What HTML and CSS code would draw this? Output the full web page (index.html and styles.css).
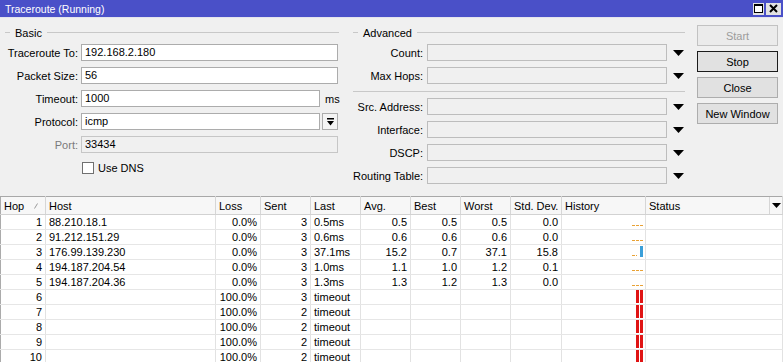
FILE: index.html
```html
<html lang="en"><head>
  <meta charset="UTF-8">
  <meta name="viewport" content="width=device-width, initial-scale=1.0">
  <title>Traceroute (Running)</title>
  <link rel="stylesheet" href="styles.css">
</head>
<body>
  <div class="titlebar">
    <span class="title">Traceroute (Running)</span>
    <span class="winbtns">
      <span class="winbtn max"><svg width="9" height="9" viewBox="0 0 9 9"><rect x=".5" y=".5" width="8" height="8" fill="#fff" stroke="#000"/><rect x="1" y="1" width="7" height="1" fill="#000"/></svg></span>
      <span class="winbtn close"><svg width="9" height="9" viewBox="0 0 9 9"><path d="M1 1l7 7M8 1L1 8" stroke="#000" stroke-width="2"/></svg></span>
    </span>
  </div>

  <div class="main">
    <section class="group basic">
      <div class="legend">Basic</div>
      <div class="form">
        <label>Traceroute To:</label>
        <div class="input">192.168.2.180</div>

        <label>Packet Size:</label>
        <div class="input">56</div>

        <label>Timeout:</label>
        <div class="field">
          <div class="input">1000</div>
          <span class="suffix unit">ms</span>
        </div>

        <label>Protocol:</label>
        <div class="field">
          <div class="input">icmp</div>
          <span class="suffix pick"><svg width="7" height="8" viewBox="0 0 7 8"><path d="M0 0h7v1.5H0zM0 3h7L3.5 7.5z"/></svg></span>
        </div>

        <label class="off">Port:</label>
        <div class="input disabled">33434</div>

        <span></span>
        <div class="check"><span class="box"></span>Use DNS</div>
      </div>
    </section>

    <section class="group advanced">
      <div class="legend">Advanced</div>
      <div class="form">
        <label>Count:</label>
        <div class="input"></div>
        <span class="drop"><svg width="11" height="6" viewBox="0 0 11 6"><path d="M0 0h11L5.5 6z"/></svg></span>

        <label>Max Hops:</label>
        <div class="input"></div>
        <span class="drop"><svg width="11" height="6" viewBox="0 0 11 6"><path d="M0 0h11L5.5 6z"/></svg></span>

        <div class="sep"></div>

        <label>Src. Address:</label>
        <div class="input"></div>
        <span class="drop"><svg width="11" height="6" viewBox="0 0 11 6"><path d="M0 0h11L5.5 6z"/></svg></span>

        <label>Interface:</label>
        <div class="input"></div>
        <span class="drop"><svg width="11" height="6" viewBox="0 0 11 6"><path d="M0 0h11L5.5 6z"/></svg></span>

        <label>DSCP:</label>
        <div class="input"></div>
        <span class="drop"><svg width="11" height="6" viewBox="0 0 11 6"><path d="M0 0h11L5.5 6z"/></svg></span>

        <label>Routing Table:</label>
        <div class="input"></div>
        <span class="drop"><svg width="11" height="6" viewBox="0 0 11 6"><path d="M0 0h11L5.5 6z"/></svg></span>
      </div>
    </section>

    <div class="buttons">
      <div class="btn disabled">Start</div>
      <div class="btn focus">Stop</div>
      <div class="btn">Close</div>
      <div class="btn">New Window</div>
    </div>
  </div>

  <table class="hops">
    <colgroup>
      <col class="c-hop"><col class="c-host"><col class="c-loss"><col class="c-sent"><col class="c-last">
      <col class="c-val"><col class="c-val"><col class="c-val"><col class="c-dev"><col class="c-hist"><col>
    </colgroup>
    <thead>
      <tr>
        <th><div class="hop-head">Hop<svg width="4" height="6" viewBox="0 0 4 6"><path d="M.5 5.5L3.5.5" stroke="#9a9a9a"/></svg></div></th>
        <th>Host</th>
        <th>Loss</th>
        <th>Sent</th>
        <th>Last</th>
        <th>Avg.</th>
        <th>Best</th>
        <th>Worst</th>
        <th>Std. Dev.</th>
        <th>History</th>
        <th class="status"><div class="status-head">Status<span class="menu"><svg width="9" height="5" viewBox="0 0 9 5"><path d="M0 0h9L4.5 5z"/></svg></span></div></th>
      </tr>
    </thead>
    <tbody>
      <tr><td class="num">1</td><td>88.210.18.1</td><td class="num">0.0%</td><td class="num">3</td><td>0.5ms</td><td class="num">0.5</td><td class="num">0.5</td><td class="num">0.5</td><td class="num">0.0</td><td class="hist"><div class="spark"><span class="dash"></span></div></td><td></td></tr>
      <tr><td class="num">2</td><td>91.212.151.29</td><td class="num">0.0%</td><td class="num">3</td><td>0.6ms</td><td class="num">0.6</td><td class="num">0.6</td><td class="num">0.6</td><td class="num">0.0</td><td class="hist"><div class="spark"><span class="dash"></span></div></td><td></td></tr>
      <tr><td class="num">3</td><td>176.99.139.230</td><td class="num">0.0%</td><td class="num">3</td><td>37.1ms</td><td class="num">15.2</td><td class="num">0.7</td><td class="num">37.1</td><td class="num">15.8</td><td class="hist"><div class="spark"><span class="dash short"></span><span class="bar blue"></span></div></td><td></td></tr>
      <tr><td class="num">4</td><td>194.187.204.54</td><td class="num">0.0%</td><td class="num">3</td><td>1.0ms</td><td class="num">1.1</td><td class="num">1.0</td><td class="num">1.2</td><td class="num">0.1</td><td class="hist"><div class="spark"><span class="dash"></span></div></td><td></td></tr>
      <tr><td class="num">5</td><td>194.187.204.36</td><td class="num">0.0%</td><td class="num">3</td><td>1.3ms</td><td class="num">1.3</td><td class="num">1.2</td><td class="num">1.3</td><td class="num">0.0</td><td class="hist"><div class="spark"><span class="dash"></span></div></td><td></td></tr>
      <tr><td class="num">6</td><td></td><td class="num">100.0%</td><td class="num">3</td><td>timeout</td><td></td><td></td><td></td><td></td><td class="hist"><div class="spark"><span class="bar red"></span><span class="bar red"></span></div></td><td></td></tr>
      <tr><td class="num">7</td><td></td><td class="num">100.0%</td><td class="num">2</td><td>timeout</td><td></td><td></td><td></td><td></td><td class="hist"><div class="spark"><span class="bar red"></span><span class="bar red"></span></div></td><td></td></tr>
      <tr><td class="num">8</td><td></td><td class="num">100.0%</td><td class="num">2</td><td>timeout</td><td></td><td></td><td></td><td></td><td class="hist"><div class="spark"><span class="bar red"></span><span class="bar red"></span></div></td><td></td></tr>
      <tr><td class="num">9</td><td></td><td class="num">100.0%</td><td class="num">2</td><td>timeout</td><td></td><td></td><td></td><td></td><td class="hist"><div class="spark"><span class="bar red"></span><span class="bar red"></span></div></td><td></td></tr>
      <tr><td class="num">10</td><td></td><td class="num">100.0%</td><td class="num">2</td><td>timeout</td><td></td><td></td><td></td><td></td><td class="hist"><div class="spark"><span class="bar red"></span><span class="bar red"></span></div></td><td></td></tr>
    </tbody>
  </table>
</body></html>
```

FILE: styles.css
```css
html, body {
  margin: 0;
  padding: 0;
}
body {
  width: 783px;
  height: 362px;
  overflow: hidden;
  background: #f0f0f0;
  color: #000;
  font-family: "Liberation Sans", Arial, sans-serif;
  font-size: 11px;
}
.titlebar {
  height: 17px;
  background: #4a50c8;
  color: #fff;
  display: flex;
  align-items: center;
  justify-content: space-between;
  padding: 0 2px 0 5px;
  border-bottom: 1px solid #e4e4ee;
}
.title {
  font-size: 10.5px;
}
.winbtns {
  display: flex;
  gap: 2px;
}
.winbtn {
  height: 12px;
  background: #e2e2e2;
  display: flex;
  align-items: center;
  justify-content: center;
}
.winbtn.max {
  width: 11px;
}
.winbtn.close {
  width: 15px;
}
.main {
  display: flex;
  align-items: flex-start;
  padding-top: 7px;
}
.group {
  display: flex;
  flex-direction: column;
}
.basic {
  margin-left: 5px;
  width: 334px;
}
.advanced {
  margin-left: 14px;
  width: 332px;
}
.legend {
  display: flex;
  align-items: center;
  gap: 5px;
  height: 13px;
  margin-top: 1px;
}
.legend::before {
  content: "";
  width: 5px;
  height: 1px;
  background: #c8c8c8;
}
.legend::after {
  content: "";
  flex: 1;
  height: 1px;
  background: #c8c8c8;
}
.form {
  display: grid;
  row-gap: 6px;
  margin-top: 5px;
  align-items: center;
}
.basic .form {
  grid-template-columns: 73px 257px;
  column-gap: 3px;
}
.advanced .form {
  grid-template-columns: 70px 240px 14px;
  column-gap: 4px;
}
label {
  text-align: right;
  white-space: nowrap;
}
label.off {
  color: #7a7a7a;
}
.input {
  height: 17px;
  box-sizing: border-box;
  border: 1px solid #acacac;
  background: #fff;
  padding: 0 3px;
  line-height: 15px;
  white-space: nowrap;
}
.input.disabled {
  background: #f0f0f0;
  border-color: #c6c6c6;
}
.advanced .input {
  background: #f0f0f0;
  border-color: #bdbdbd;
}
.field {
  display: flex;
  align-items: center;
  gap: 2px;
}
.field .input {
  flex: 1;
}
.suffix {
  width: 16px;
  flex: none;
}
.unit {
  padding-left: 3px;
  box-sizing: border-box;
}
.pick {
  height: 17px;
  box-sizing: border-box;
  border: 1px solid #acacac;
  background: #f4f4f4;
  display: flex;
  align-items: center;
  justify-content: center;
}
.check {
  display: flex;
  align-items: center;
  gap: 4px;
  height: 17px;
  padding-left: 1px;
}
.box {
  width: 12px;
  height: 12px;
  box-sizing: border-box;
  border: 1px solid #707070;
  background: #fff;
}
.drop {
  display: flex;
  justify-content: center;
}
.sep {
  grid-column: 1 / -1;
  height: 1px;
  margin-top: 1px;
  background: #c8c8c8;
}
.buttons {
  margin-left: 12px;
  width: 81px;
  display: flex;
  flex-direction: column;
  gap: 5px;
}
.btn {
  height: 21px;
  box-sizing: border-box;
  border: 1px solid #adadad;
  background: #e1e1e1;
  display: flex;
  align-items: center;
  justify-content: center;
}
.btn.disabled {
  color: #9c9c9c;
  border-color: #c2c2c2;
  background: #ebebeb;
}
.btn.focus {
  border-color: #1c1c1c;
}

/* hop table */
.hops {
  margin-top: 12px;
  width: 783px;
  border-collapse: collapse;
  table-layout: fixed;
  background: #fff;
  font-family: inherit;
  font-size: 11px;
  color: #000;
}
.c-hop { width: 45px; }
.c-host { width: 170px; }
.c-loss { width: 45px; }
.c-sent, .c-last, .c-val { width: 50px; }
.c-dev { width: 51px; }
.c-hist { width: 84px; }
.hops th, .hops td {
  padding: 0 3px;
  border-right: 1px solid #e2e2e2;
  border-bottom: 1px solid #e6e6e6;
  white-space: nowrap;
  overflow: hidden;
  font-weight: normal;
}
.hops th:first-child, .hops td:first-child {
  border-left: 1px solid #ababab;
}
.hops th {
  height: 17px;
  text-align: left;
  background: #f7f7f7;
  border-top: 1px solid #a8a8a8;
  border-right-color: #d6d6d6;
  border-bottom-color: #d2d2d2;
}
.hops td {
  height: 14px;
  line-height: 14px;
}
.hops .num {
  text-align: right;
}
.hop-head {
  display: flex;
  align-items: center;
  justify-content: space-between;
  padding-right: 4px;
}
.hops th.status {
  padding-right: 0;
}
.status-head {
  display: flex;
  align-items: center;
  justify-content: space-between;
}
.menu {
  width: 12px;
  height: 17px;
  border-left: 1px solid #d6d6d6;
  display: flex;
  align-items: center;
  justify-content: center;
}
.hops td.hist {
  padding: 0 2px 0 0;
}
.spark {
  height: 14px;
  display: flex;
  justify-content: flex-end;
  align-items: flex-end;
  gap: 1px;
}
.dash {
  width: 11px;
  height: 1px;
  margin-bottom: 3px;
  background: repeating-linear-gradient(90deg, #e9a235 0 3px, transparent 3px 4px);
}
.dash.short {
  width: 5px;
  margin-right: 2px;
}
.bar {
  width: 3px;
}
.bar.blue {
  height: 11px;
  margin-bottom: 2px;
  background: #3a9fd9;
}
.bar.red {
  height: 13px;
  margin-bottom: 1px;
  background: #e01414;
}
```
